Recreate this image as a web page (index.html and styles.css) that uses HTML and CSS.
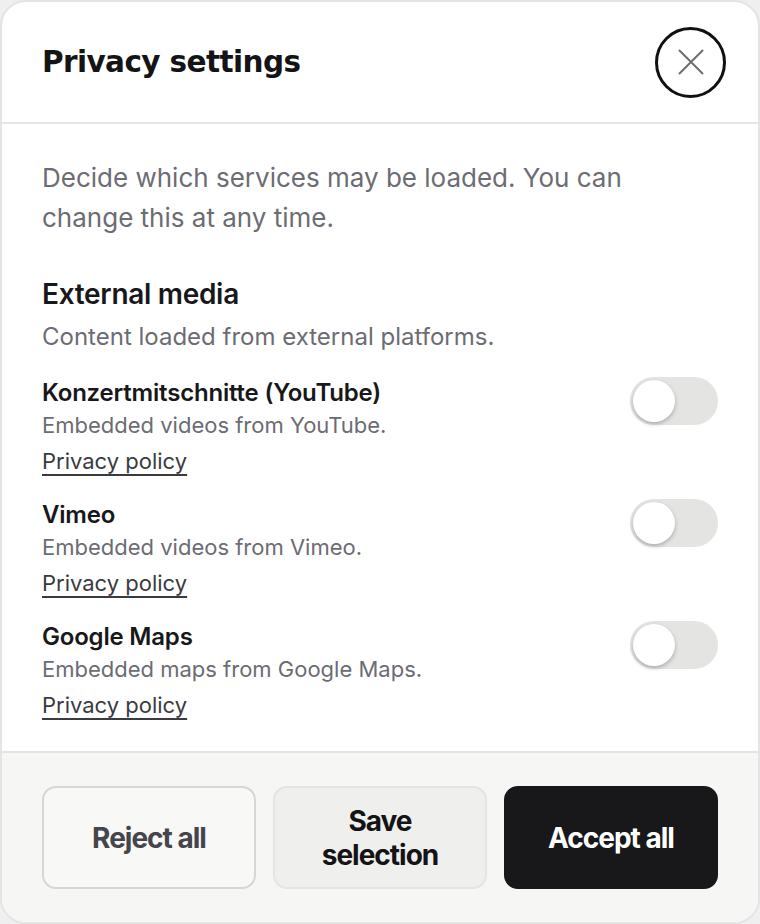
FILE: index.html
```html
<!DOCTYPE html>
<html lang="en">
<head>
<meta charset="utf-8">
<title>Privacy settings</title>
<link rel="stylesheet" href="styles.css">
</head>
<body>
<div class="modal">
  <header class="head">
    <h1 class="title">Privacy settings</h1>
    <button class="close" aria-label="Close">
      <svg width="26" height="26" viewBox="0 0 26 26"><path d="M1.5 1.5L24.5 24.5M24.5 1.5L1.5 24.5" stroke="#6e6e73" stroke-width="2" stroke-linecap="round" fill="none"/></svg>
    </button>
  </header>
  <main class="content">
    <p class="intro">Decide which services may be loaded. You can change this at any time.</p>
    <h2 class="group">External media</h2>
    <p class="group-sub">Content loaded from external platforms.</p>
    <div class="items">
      <div class="item">
        <div class="item-text">
          <div class="item-title">Konzertmitschnitte (YouTube)</div>
          <div class="item-desc">Embedded videos from YouTube.</div>
          <a class="policy" href="#">Privacy policy</a>
        </div>
        <span class="toggle"><span class="knob"></span></span>
      </div>
      <div class="item">
        <div class="item-text">
          <div class="item-title">Vimeo</div>
          <div class="item-desc">Embedded videos from Vimeo.</div>
          <a class="policy" href="#">Privacy policy</a>
        </div>
        <span class="toggle"><span class="knob"></span></span>
      </div>
      <div class="item">
        <div class="item-text">
          <div class="item-title">Google Maps</div>
          <div class="item-desc">Embedded maps from Google Maps.</div>
          <a class="policy" href="#">Privacy policy</a>
        </div>
        <span class="toggle"><span class="knob"></span></span>
      </div>
    </div>
  </main>
  <footer class="foot">
    <button class="btn btn-reject">Reject all</button>
    <button class="btn btn-save">Save selection</button>
    <button class="btn btn-accept">Accept all</button>
  </footer>
</div>
</body>
</html>
```
FILE: styles.css
```css
* { box-sizing: border-box; }
html, body { margin: 0; padding: 0; }
body {
  background: #efefef;
  font-family: Inter, "Noto Sans", sans-serif;
  width: 760px;
  height: 924px;
  overflow: hidden;
}
.modal {
  width: 760px;
  height: 924px;
  background: #ffffff;
  border: 2px solid #e4e4e4;
  border-radius: 26px;
  overflow: hidden;
  display: flex;
  flex-direction: column;
}
.head {
  height: 122px;
  flex: none;
  display: flex;
  align-items: center;
  justify-content: space-between;
  padding: 0 32px 0 40px;
  border-bottom: 2px solid #e6e6e6;
}
.title {
  margin: 0;
  font-family: "DejaVu Sans", "Open Sans", sans-serif;
  font-weight: 700;
  font-size: 29.5px;
  letter-spacing: -0.6px;
  color: #141416;
}
.close {
  width: 71px;
  height: 71px;
  border: 3px solid #111113;
  border-radius: 50%;
  background: #fff;
  display: flex;
  align-items: center;
  justify-content: center;
  padding: 0;
}
.content {
  flex: 1;
  padding: 34px 40px 0 40px;
}
.intro {
  margin: 0;
  max-width: 640px;
  font-size: 26px;
  line-height: 40px;
  color: #6c6c74;
}
.group {
  margin: 38px 0 0 0;
  font-size: 28px;
  line-height: 36px;
  font-weight: 600;
  color: #18181b;
  letter-spacing: -0.3px;
}
.group-sub {
  margin: 9px 0 0 0;
  font-size: 24px;
  line-height: 32px;
  color: #6c6c74;
}
.items {
  margin-top: 24px;
  display: flex;
  flex-direction: column;
  gap: 22px;
}
.item {
  display: flex;
  justify-content: space-between;
  align-items: flex-start;
}
.item-text {
  display: flex;
  flex-direction: column;
  align-items: flex-start;
}
.item-title {
  font-size: 24px;
  line-height: 32px;
  font-weight: 600;
  color: #18181b;
  letter-spacing: -0.2px;
}
.item-desc {
  font-size: 22px;
  line-height: 32px;
  color: #6c6c74;
}
.policy {
  margin-top: 4px;
  font-size: 22px;
  line-height: 32px;
  color: #3a3a40;
  text-decoration: underline;
  text-decoration-thickness: 2px;
  text-underline-offset: 5px;
}
.toggle {
  width: 88px;
  height: 48px;
  border-radius: 24px;
  background: #e4e4e3;
  padding: 3px;
  display: flex;
  flex: none;
}
.knob {
  width: 42px;
  height: 42px;
  border-radius: 50%;
  background: #fff;
  box-shadow: 0 2px 4px rgba(0,0,0,0.25);
}
.foot {
  flex: none;
  background: #f6f6f4;
  border-top: 2px solid #e3e3e2;
  padding: 33px 40px 33px 40px;
  display: flex;
  gap: 17px;
}
.btn {
  flex: 1;
  height: 103px;
  border-radius: 14px;
  font-family: Inter, sans-serif;
  font-weight: 700;
  font-size: 28px;
  line-height: 34px;
  letter-spacing: -1px;
  padding: 0 30px;
}
.btn-reject {
  background: #f8f8f6;
  border: 2px solid #d6d6d4;
  color: #45454b;
}
.btn-save {
  background: #efefed;
  border: 2px solid #e4e4e2;
  color: #141416;
}
.btn-accept {
  background: #18181b;
  border: 2px solid #18181b;
  color: #ffffff;
}
```
